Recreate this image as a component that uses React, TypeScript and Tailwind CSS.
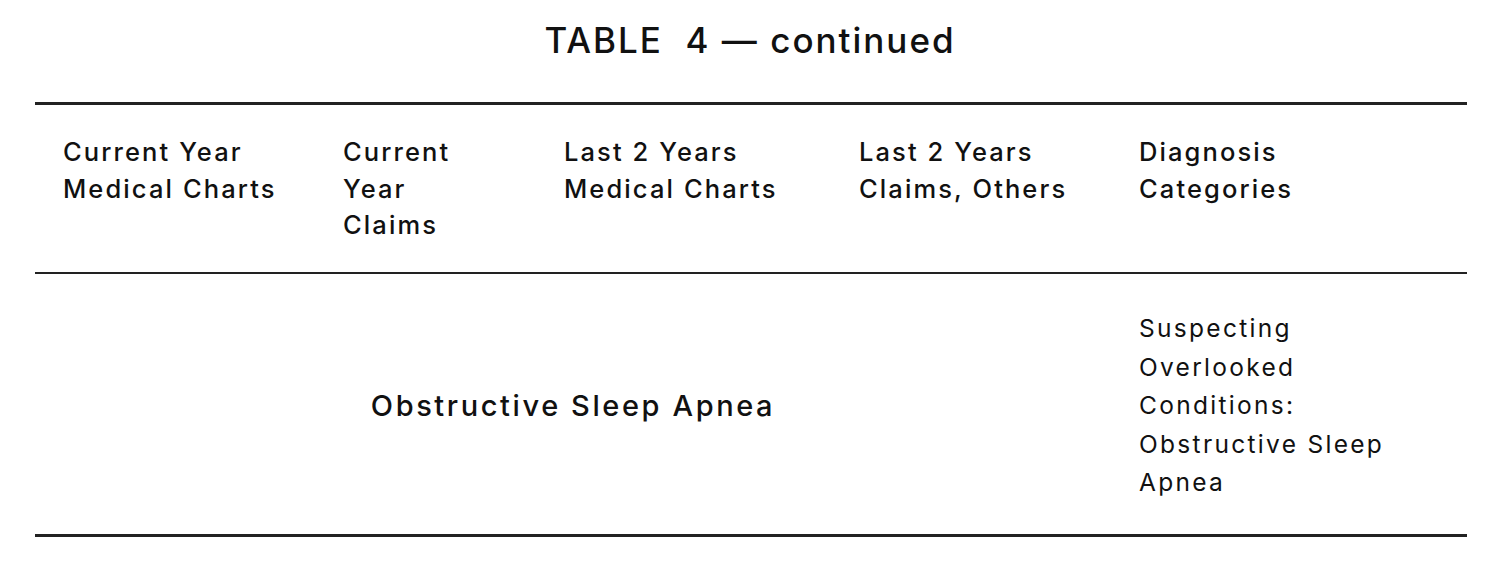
import React from "react";

const headers = [
  ["Current Year", "Medical Charts"],
  ["Current", "Year", "Claims"],
  ["Last 2 Years", "Medical Charts"],
  ["Last 2 Years", "Claims, Others"],
  ["Diagnosis", "Categories"],
];

const note = ["Suspecting", "Overlooked", "Conditions:", "Obstructive Sleep", "Apnea"];

export default function App() {
  return (
    <div
      className="w-[1500px] h-[569px] bg-white text-[#111] overflow-hidden"
      style={{ fontFamily: 'Inter, "Noto Sans", sans-serif' }}
    >
      <h1 className="pt-[20px] h-[102px] text-center text-[35px] leading-[40px] font-medium tracking-[2px]">
        TABLE&nbsp; 4 — continued
      </h1>

      <div className="ml-[35px] w-[1432px]">
        {/* Header row */}
        <div className="grid grid-cols-[280px_221px_295px_280px_356px] border-t-[3px] border-b-2 border-[#222] h-[172px]">
          {headers.map((lines, i) => (
            <div
              key={i}
              className="pl-[28px] pt-[29px] text-[25.5px] leading-[36.5px] font-medium tracking-[2.1px]"
            >
              {lines.map((l) => (
                <span key={l} className="block whitespace-nowrap">
                  {l}
                </span>
              ))}
            </div>
          ))}
        </div>

        {/* Body row */}
        <div className="grid grid-cols-[1076px_356px] border-b-[3px] border-[#222] h-[263px]">
          <div className="flex items-center justify-center pt-[3px] text-[29px] font-medium tracking-[2.6px]">
            Obstructive Sleep Apnea
          </div>
          <div className="pl-[28px] pt-[35px] text-[24.5px] leading-[38.5px] tracking-[2.3px]">
            {note.map((l) => (
              <span key={l} className="block whitespace-nowrap">
                {l}
              </span>
            ))}
          </div>
        </div>
      </div>
    </div>
  );
}
